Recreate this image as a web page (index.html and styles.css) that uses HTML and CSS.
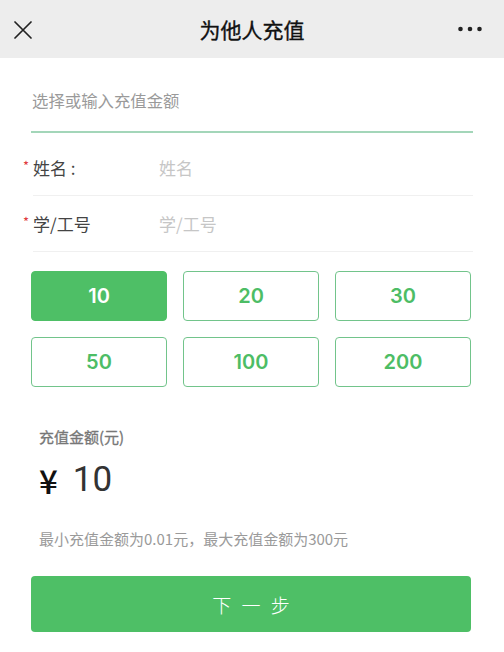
FILE: index.html
```html
<!DOCTYPE html>
<html lang="zh-CN">
<head>
<meta charset="utf-8">
<title>为他人充值</title>
<link rel="stylesheet" href="styles.css">
</head>
<body>
<div class="page">
  <header class="navbar">
    <div class="nav-side nav-left">
      <svg class="icon-close" width="18" height="18" viewBox="0 0 18 18"><path d="M1 1 L17 17 M17 1 L1 17" stroke="#222" stroke-width="1.7" stroke-linecap="round" fill="none"/></svg>
    </div>
    <h1 class="nav-title">为他人充值</h1>
    <div class="nav-side nav-right">
      <svg class="icon-more" width="24" height="6" viewBox="0 0 24 6"><circle cx="2.5" cy="3" r="2.3" fill="#222"/><circle cx="12" cy="3" r="2.3" fill="#222"/><circle cx="21.5" cy="3" r="2.3" fill="#222"/></svg>
    </div>
  </header>

  <main class="content">
    <div class="amount-input">选择或输入充值金额</div>

    <div class="form">
      <div class="field">
        <span class="star">*</span>
        <div class="field-body">
          <span class="field-label">姓名 :</span>
          <span class="field-placeholder">姓名</span>
        </div>
      </div>
      <div class="field">
        <span class="star">*</span>
        <div class="field-body">
          <span class="field-label">学/工号</span>
          <span class="field-placeholder">学/工号</span>
        </div>
      </div>
    </div>

    <div class="options">
      <div class="option selected">10</div>
      <div class="option">20</div>
      <div class="option">30</div>
      <div class="option">50</div>
      <div class="option">100</div>
      <div class="option">200</div>
    </div>

    <div class="summary">
      <div class="summary-label">充值金额(元)</div>
      <div class="summary-amount"><span class="yen">¥</span><span class="value">10</span></div>
      <div class="summary-hint">最小充值金额为0.01元，最大充值金额为300元</div>
    </div>

    <button class="next-btn" type="button">下 一 步</button>
  </main>
</div>
</body>
</html>
```

FILE: styles.css
```css
* {
  box-sizing: border-box;
}

html, body {
  margin: 0;
  padding: 0;
  background: #ffffff;
}

body {
  font-family: "Noto Sans CJK SC", "Noto Sans", sans-serif;
  color: #333;
}

.page {
  width: 504px;
  min-height: 652px;
  background: #fff;
}

.navbar {
  height: 58px;
  background: #ededed;
  display: flex;
  align-items: center;
}

.nav-side {
  width: 70px;
  display: flex;
  align-items: center;
}

.nav-left {
  padding-left: 14px;
  padding-top: 1px;
}

.nav-right {
  justify-content: flex-end;
  padding-right: 22px;
}

.icon-close,
.icon-more {
  display: block;
}

.nav-title {
  flex: 1;
  margin: 0;
  text-align: center;
  font-size: 21px;
  font-weight: 400;
  color: #111;
  line-height: 30px;
  -webkit-text-stroke: 0.35px #111;
}

.content {
  padding: 0 31px;
}

.amount-input {
  padding: 30px 1px 19px;
  font-size: 16.4px;
  line-height: 24px;
  color: #9a9a9a;
  border-bottom: 2px solid #a3d6b9;
}

.form {
  margin-top: 7px;
  margin-left: -9px;
}

.field {
  display: flex;
  align-items: center;
}

.star {
  width: 11px;
  color: #e0393e;
  font-size: 13px;
  line-height: 13px;
  align-self: center;
  margin-top: -6px;
  padding-left: 1px;
}

.field-body {
  flex: 1;
  height: 56px;
  display: flex;
  align-items: center;
  border-bottom: 1px solid #f0f0f0;
  font-size: 17px;
}

.field-label {
  width: 126px;
  color: #444;
}

.field-placeholder {
  color: #c6c6c6;
}

.options {
  margin-top: 19px;
  display: grid;
  grid-template-columns: repeat(3, 1fr);
  column-gap: 16px;
  row-gap: 16px;
  width: 440px;
}

.option {
  height: 50px;
  border: 1px solid #72c48b;
  border-radius: 4px;
  display: flex;
  align-items: center;
  justify-content: center;
  font-family: "Inter", "Noto Sans", sans-serif;
  font-size: 20px;
  font-weight: 600;
  color: #4dbd65;
}

.option.selected {
  background: #4ebf66;
  border-color: #4ebf66;
  color: #fff;
}

.summary {
  padding-left: 8px;
  margin-top: 39px;
}

.summary-label {
  font-size: 15px;
  line-height: 22px;
  font-weight: 400;
  color: #777;
  -webkit-text-stroke: 0.3px #777;
}

.summary-amount {
  margin-top: 10px;
  height: 44px;
  display: flex;
  align-items: center;
  color: #333;
}

.yen {
  font-size: 33px;
  font-weight: 500;
  color: #111;
  margin-right: 15px;
  line-height: 44px;
}

.value {
  font-family: "Roboto", "Noto Sans", sans-serif;
  font-size: 35px;
  font-weight: 400;
  line-height: 44px;
}

.summary-hint {
  margin-top: 26px;
  font-size: 15px;
  line-height: 22px;
  color: #9a9a9a;
}

.next-btn {
  display: flex;
  align-items: center;
  justify-content: center;
  margin-top: 26px;
  width: 440px;
  height: 56px;
  border: none;
  border-radius: 4px;
  background: #4ebf66;
  color: #fff;
  font-family: "Noto Sans CJK SC", "Noto Sans", sans-serif;
  font-size: 19px;
  font-weight: 300;
  letter-spacing: 3px;
  padding: 0 0 0 3px;
}
```
